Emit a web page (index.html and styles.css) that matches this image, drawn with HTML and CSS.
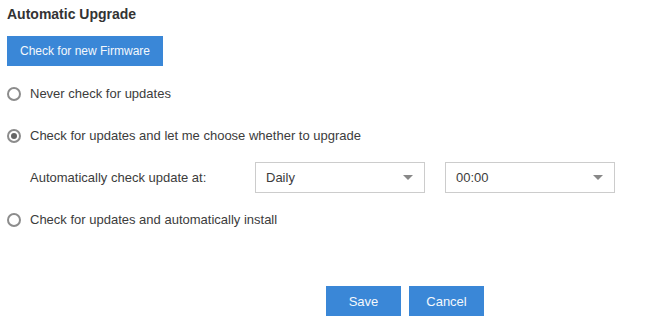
FILE: index.html
```html
<!DOCTYPE html>
<html>
<head>
<meta charset="utf-8">
<link rel="stylesheet" href="styles.css">
</head>
<body>
<div class="page">
  <h2 class="title">Automatic Upgrade</h2>
  <button class="btn btn-check">Check for new Firmware</button>
  <label class="radio-row r1"><span class="radio"></span>Never check for updates</label>
  <label class="radio-row r2"><span class="radio checked"></span>Check for updates and let me choose whether to upgrade</label>
  <div class="sched">
    <span class="sched-label">Automatically check update at:</span>
    <div class="select"><span>Daily</span><span class="caret"></span></div>
    <div class="select"><span>00:00</span><span class="caret"></span></div>
  </div>
  <label class="radio-row r3"><span class="radio"></span>Check for updates and automatically install</label>
  <div class="actions">
    <button class="btn btn-act">Save</button>
    <button class="btn btn-act">Cancel</button>
  </div>
</div>
</body>
</html>
```

FILE: styles.css
```css
html, body {
  margin: 0;
  padding: 0;
  background: #fff;
}
body {
  font-family: "Liberation Sans", Arial, sans-serif;
  font-size: 13px;
  color: #3c3c3c;
}
.page {
  padding: 6px 7px 0 7px;
  display: flex;
  flex-direction: column;
  align-items: flex-start;
}
.title {
  margin: 0;
  font-size: 14px;
  font-weight: bold;
  color: #333;
  line-height: 16px;
  height: 16px;
}
.btn {
  border: 0;
  background: #3a87d7;
  color: #f4f8fc;
  font-family: "Liberation Sans", Arial, sans-serif;
  font-size: 13px;
  height: 30px;
  padding: 0;
  cursor: pointer;
}
.btn-check {
  margin-top: 14px;
  width: 156px;
  font-size: 12px;
}
.radio-row {
  display: flex;
  align-items: center;
  height: 16px;
  line-height: 16px;
}
.r1 { margin-top: 20px; }
.r2 { margin-top: 26px; }
.r3 { margin-top: 19px; }
.radio {
  width: 10px;
  height: 10px;
  border: 2px solid #8c8c8c;
  border-radius: 50%;
  margin-right: 9px;
  position: relative;
  flex: none;
}
.radio.checked::after {
  content: "";
  position: absolute;
  left: 2px;
  top: 2px;
  width: 6px;
  height: 6px;
  border-radius: 50%;
  background: #666;
}
.sched {
  display: flex;
  align-items: center;
  margin-top: 18px;
  padding-left: 23px;
}
.sched-label {
  width: 225px;
}
.select {
  height: 29px;
  border: 1px solid #ccc;
  display: flex;
  align-items: center;
  justify-content: space-between;
  padding: 0 11px 0 10px;
  box-sizing: content-box;
  width: 147px;
  margin-right: 20px;
}
.caret {
  width: 0;
  height: 0;
  border-left: 5px solid transparent;
  border-right: 5px solid transparent;
  border-top: 5px solid #888;
}
.actions {
  display: flex;
  gap: 8px;
  margin-top: 58px;
  margin-left: 319px;
}
.btn-act {
  width: 75px;
}
```
